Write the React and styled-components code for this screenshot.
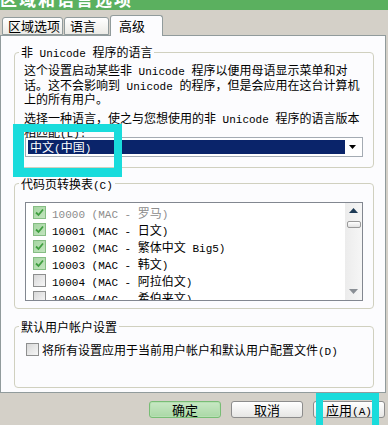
import React from "react";
import styled, { createGlobalStyle } from "styled-components";

const GlobalStyle = createGlobalStyle`
  html, body {
    margin: 0;
    padding: 0;
    background: #d4d0c8;
  }
`;

const codePages = [
  { code: "10000", name: "MAC - 罗马", checked: true, disabled: true },
  { code: "10001", name: "MAC - 日文", checked: true },
  { code: "10002", name: "MAC - 繁体中文 Big5", checked: true },
  { code: "10003", name: "MAC - 韩文", checked: true },
  { code: "10004", name: "MAC - 阿拉伯文", checked: false },
  { code: "10005", name: "MAC - 希伯来文", checked: false },
];

// latin runs get a narrow mono face, like the half-width glyphs of the system font
function T({ children }) {
  return String(children)
    .split(/([\x20-\x7e]+)/)
    .map((s, i) => (/^[\x20-\x7e]+$/.test(s) ? <Latin key={i}>{s}</Latin> : s));
}

function CheckBox({ checked }) {
  return (
    <Box $checked={checked}>
      {checked && (
        <svg width="9" height="9" viewBox="0 0 9 9">
          <path d="M1 4.5 L3.5 7 L8 1.5" fill="none" stroke="#3f9e3f" strokeWidth="1.8" />
        </svg>
      )}
    </Box>
  );
}

export default function App() {
  return (
    <Dialog>
      <GlobalStyle />
      <TitleBar>
        <span>区域和语言选项</span>
      </TitleBar>

      <TabRow>
        <Tab $w={61}>区域选项</Tab>
        <Tab $w={45}>语言</Tab>
        <Tab $w={53} $active>
          高级
        </Tab>
      </TabRow>

      <Panel>
        <Group>
          <Legend>
            <T>非 Unicode 程序的语言</T>
          </Legend>
          <GroupBody $pad="4px 10px 10px 10px">
            <Para>
              <T>这个设置启动某些非 Unicode 程序以便用母语显示菜单和对</T>
              <br />
              <T>话。这不会影响到 Unicode 的程序，但是会应用在这台计算机</T>
              <br />
              上的所有用户。
            </Para>
            <Para $gap={4}>
              <T>选择一种语言，使之与您想使用的非 Unicode 程序的语言版本</T>
              <br />
              <T>相匹配(L):</T>
            </Para>
            <Select>
              <SelectValue>
                <T>中文(中国)</T>
              </SelectValue>
              <SelectArrow>
                <svg width="7" height="4" viewBox="0 0 7 4">
                  <path d="M0 0 H7 L3.5 4 Z" fill="#000" />
                </svg>
              </SelectArrow>
            </Select>
          </GroupBody>
        </Group>

        <Group $top={9}>
          <Legend>
            <T>代码页转换表(C)</T>
          </Legend>
          <GroupBody $pad="11px 10px 7px 10px">
            <ListBox>
              <Rows>
                {codePages.map((p) => (
                  <Row key={p.code} $disabled={p.disabled}>
                    <CheckBox checked={p.checked} />
                    <span>
                      <T>{`${p.code} (${p.name})`}</T>
                    </span>
                  </Row>
                ))}
              </Rows>
              <ScrollBar>
                <ScrollArrow>
                  <svg width="9" height="5" viewBox="0 0 9 5">
                    <path d="M4.5 0 L9 5 H0 Z" fill="#1d3a55" />
                  </svg>
                </ScrollArrow>
                <Thumb />
                <ScrollSpace />
                <ScrollArrow>
                  <svg width="9" height="5" viewBox="0 0 9 5">
                    <path d="M0 0 H9 L4.5 5 Z" fill="#8a8f95" />
                  </svg>
                </ScrollArrow>
              </ScrollBar>
            </ListBox>
          </GroupBody>
        </Group>

        <Group $top={11} $grow>
          <Legend>默认用户帐户设置</Legend>
          <GroupBody $pad="9px 10px 0 11px">
            <CheckRow>
              <CheckBox checked={false} />
              <span>
                <T>将所有设置应用于当前用户帐户和默认用户配置文件(D)</T>
              </span>
            </CheckRow>
          </GroupBody>
        </Group>
      </Panel>

      <ButtonRow>
        <Button $primary>确定</Button>
        <Button>取消</Button>
        <Button>
          <T>应用(A)</T>
        </Button>
      </ButtonRow>

      <Marker style={{ left: 13, top: 124, width: 109, height: 53 }} $b="8px 8px 9px 11px" />
      <Marker style={{ left: 316, top: 393, width: 63, height: 45 }} $b="7px" />
    </Dialog>
  );
}

const Dialog = styled.div`
  position: relative;
  width: 388px;
  height: 425px;
  overflow: hidden;
  background: #d4d0c8;
  display: flex;
  flex-direction: column;
  font-family: "Noto Sans CJK SC", "Liberation Sans", sans-serif;
  font-size: 12px;
  color: #000;
`;

const Latin = styled.span`
  font-family: "Liberation Mono", "DejaVu Sans Mono", monospace;
  font-size: 11px;
  line-height: 9px;
`;

const TitleBar = styled.div`
  height: 10px;
  flex: none;
  overflow: hidden;
  background: #5bb05f;
  color: #fff;
  span {
    display: block;
    margin-top: -11px;
    font-size: 17px;
    font-weight: bold;
    line-height: 20px;
    letter-spacing: 2px;
    white-space: nowrap;
  }
`;

const TabRow = styled.div`
  height: 25px;
  flex: none;
  display: flex;
  align-items: flex-end;
  gap: 1px;
  padding-left: 2px;
  position: relative;
  z-index: 1;
`;

const Tab = styled.div`
  box-sizing: border-box;
  width: ${(p) => p.$w}px;
  height: ${(p) => (p.$active ? 21 : 18)}px;
  margin-bottom: ${(p) => (p.$active ? -1 : 0)}px;
  border: 1px solid #919b9c;
  border-bottom: ${(p) => (p.$active ? "none" : "1px solid #919b9c")};
  border-radius: 3px 3px 0 0;
  background: ${(p) => (p.$active ? "#fcfcfe" : "linear-gradient(#ffffff, #ecebe6)")};
  padding: ${(p) => (p.$active ? "2px 0 0 8px" : "0 0 0 5px")};
  font-size: 13px;
  line-height: 16px;
  white-space: nowrap;
`;

const Panel = styled.div`
  box-sizing: border-box;
  flex: none;
  width: 386px;
  height: 358px;
  border: 1px solid #919b9c;
  background: #fcfcfe;
  padding: 9px 11px 4px 13px;
  display: flex;
  flex-direction: column;
`;

const Group = styled.fieldset`
  margin: ${(p) => p.$top || 0}px 0 0 0;
  padding: 0;
  min-width: 0;
  border: 1px solid #d0d0bf;
  border-radius: 4px;
  flex: ${(p) => (p.$grow ? 1 : "none")};
`;

const Legend = styled.legend`
  margin-left: 4px;
  padding: 0 2px;
  line-height: 14px;
  font-size: 12px;
`;

const GroupBody = styled.div`
  padding: ${(p) => p.$pad};
`;

const Para = styled.p`
  margin: ${(p) => p.$gap || 0}px 0 0 -1px;
  line-height: 14.5px;
  white-space: nowrap;
`;

const Select = styled.div`
  box-sizing: border-box;
  height: 20px;
  margin-top: -3px;
  border: 1px solid #a4abb3;
  background: #fff;
  padding: 2px;
  display: flex;
`;

const SelectValue = styled.div`
  width: 315px;
  background: #0a246a;
  color: #fff;
  line-height: 14px;
  padding-left: 2px;
`;

const SelectArrow = styled.div`
  flex: 1;
  display: flex;
  align-items: center;
  justify-content: center;
  padding-top: 1px;
`;

const ListBox = styled.div`
  box-sizing: border-box;
  height: 99px;
  border: 1px solid #828790;
  background: #fff;
  display: flex;
`;

const Rows = styled.div`
  flex: 1;
  overflow: hidden;
  padding-top: 1px;
`;

const Row = styled.div`
  height: 17px;
  display: flex;
  align-items: center;
  gap: 6px;
  padding-left: 7px;
  white-space: pre;
  color: ${(p) => (p.$disabled ? "#8d8d8d" : "#000")};
`;

const Box = styled.span`
  box-sizing: border-box;
  flex: none;
  width: 13px;
  height: 13px;
  border: 1px solid ${(p) => (p.$checked ? "#86bd84" : "#8e8f8f")};
  background: ${(p) =>
    p.$checked ? "linear-gradient(135deg, #a6d6a2, #c2e4be)" : "linear-gradient(135deg, #d8d8d8, #f7f7f7)"};
  display: flex;
  align-items: center;
  justify-content: center;
`;

const ScrollBar = styled.div`
  width: 17px;
  flex: none;
  background: linear-gradient(90deg, #ececec, #f6f6f6);
  display: flex;
  flex-direction: column;
  align-items: center;
`;

const ScrollArrow = styled.div`
  height: 16px;
  display: flex;
  align-items: center;
  justify-content: center;
`;

const Thumb = styled.div`
  box-sizing: border-box;
  width: 14px;
  height: 7px;
  margin-top: 2px;
  border: 1px solid #9a9a9a;
  border-radius: 2px;
  background: linear-gradient(#ffffff, #e2e2e2);
`;

const ScrollSpace = styled.div`
  flex: 1;
`;

const CheckRow = styled.div`
  display: flex;
  align-items: center;
  gap: 3px;
  white-space: nowrap;
  line-height: 14px;
`;

const ButtonRow = styled.div`
  flex: 1;
  display: flex;
  justify-content: flex-end;
  align-items: flex-start;
  gap: 10px;
  padding: 8px 3px 0 0;
`;

const Button = styled.div`
  box-sizing: border-box;
  width: 72px;
  height: 17px;
  border: 1px solid ${(p) => (p.$primary ? "#78bd75" : "#8c8c8c")};
  border-radius: 3px;
  background: ${(p) =>
    p.$primary ? "linear-gradient(#c8e8c4, #aad8a6)" : "linear-gradient(#ffffff, #e6e6e4)"};
  box-shadow: ${(p) => (p.$primary ? "inset 0 0 0 1px #b6e0b2" : "none")};
  text-align: center;
  line-height: 15px;
  font-size: 13px;
`;

const Marker = styled.div`
  position: absolute;
  box-sizing: border-box;
  border-style: solid;
  border-color: #19dcdc;
  border-width: ${(p) => p.$b};
  pointer-events: none;
`;
